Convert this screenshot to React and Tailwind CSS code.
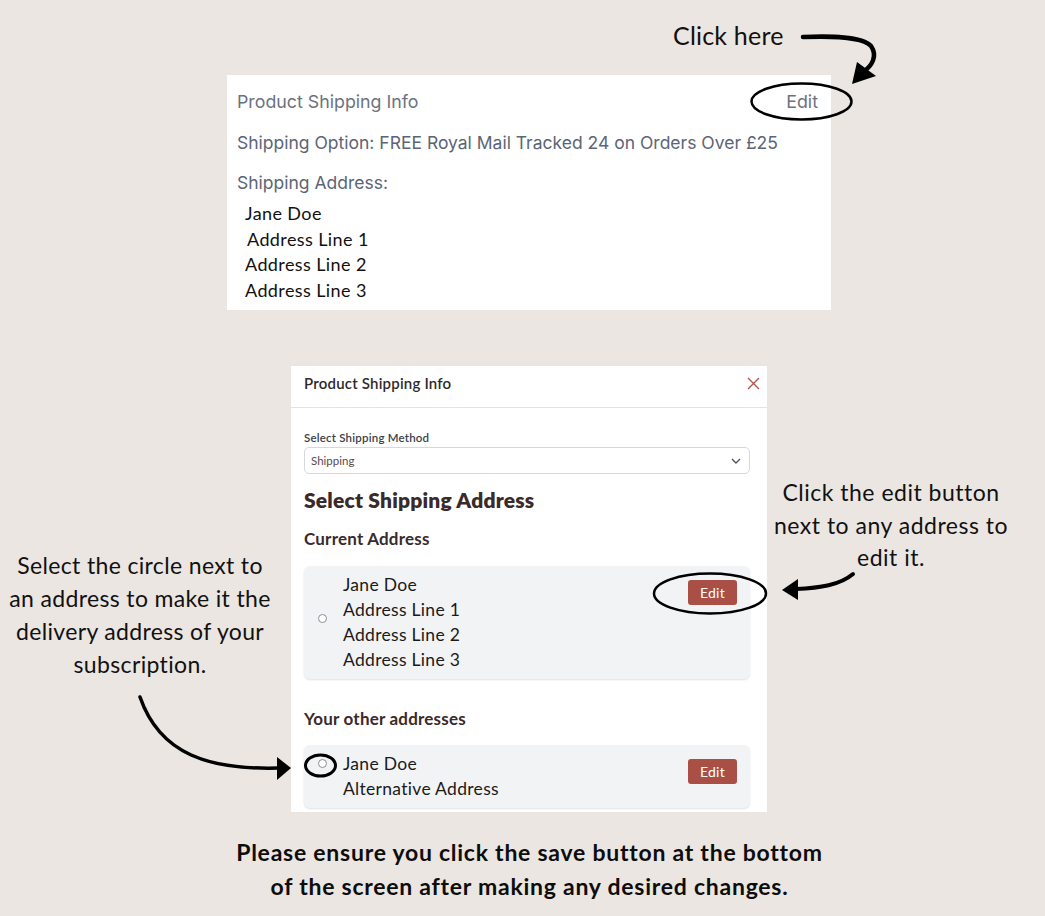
import React from "react";

const ann = { fontFamily: "Lato, 'Open Sans', sans-serif" };
const ui = { fontFamily: "Inter, Roboto, 'Liberation Sans', sans-serif" };

function Radio() {
  return <span className="block w-[9px] h-[9px] rounded-full border border-[#8a8f99] bg-white shrink-0" />;
}

function EditBtn() {
  return (
    <button className="w-[49px] h-[25px] rounded-[3px] bg-[#a94f45] text-white text-[14px] tracking-[0.3px] leading-none flex items-center justify-center shrink-0">
      Edit
    </button>
  );
}

function AddressCard({ lines, radioAlign, btnMt }) {
  return (
    <div className="flex rounded-[6px] bg-[#f2f3f5] shadow-[0_1px_2px_rgba(0,0,0,0.12)] pl-[14px] pr-[13px]">
      <div className={`flex ${radioAlign} pt-[6px] pb-[7px] grow`}>
        <div className={radioAlign === "items-start" ? "pt-[8px]" : "pb-[8px]"}>
          <Radio />
        </div>
        <div className="ml-[16px] text-[17.5px] tracking-[0.3px] leading-[25px] text-[#1a1a1a]">
          {lines.map((l) => (
            <div key={l}>{l}</div>
          ))}
        </div>
      </div>
      <div className={btnMt}>
        <EditBtn />
      </div>
    </div>
  );
}

export default function App() {
  return (
    <div className="relative w-[1045px] h-[916px] bg-[#ebe6e1] overflow-hidden" style={ann}>
      {/* Click here */}
      <div className="pt-[21px] pl-[673px] text-[25px] tracking-[0.2px] leading-[28px] text-[#111]">Click here</div>

      {/* Top card */}
      <div className="ml-[227px] mt-[26px] w-[604px] h-[235px] bg-white pl-[10px] pr-[13px]">
        <div className="flex justify-between items-center h-[50px] pt-[4px] text-[17.8px] text-[#6b7380]" style={ui}>
          <span>Product Shipping Info</span>
          <span>Edit</span>
        </div>
        <div className="text-[17.5px] leading-[30px] text-[#5b6575] mt-[3px]" style={ui}>
          Shipping Option: FREE Royal Mail Tracked 24 on Orders Over £25
        </div>
        <div className="text-[17.5px] leading-[30px] text-[#5b6575] mt-[10px]" style={ui}>
          Shipping Address:
        </div>
        <div className="pl-[8px] text-[18px] tracking-[0.4px] leading-[25.5px] text-[#111] mt-[3px]">
          <div>Jane Doe</div>
          <div className="pl-[2px]">Address Line 1</div>
          <div>Address Line 2</div>
          <div>Address Line 3</div>
        </div>
      </div>

      {/* Middle row */}
      <div className="flex mt-[56px]">
        <div className="w-[280px] mr-[11px] pt-[183px] text-center text-[23px] tracking-[0.35px] leading-[33px] text-[#111]">
          <div className="whitespace-nowrap">Select the circle next to</div>
          <div className="whitespace-nowrap">an address to make it the</div>
          <div className="whitespace-nowrap">delivery address of your</div>
          <div className="whitespace-nowrap">subscription.</div>
        </div>

        {/* Modal */}
        <div className="w-[476px] h-[446px] bg-white">
          <div className="h-[42px] border-b border-[#e3e3e3] flex items-center justify-between pl-[13px] pr-[7px] pb-[6px]">
            <span className="text-[15px] tracking-[0.2px] font-semibold text-[#2e2a2b]">Product Shipping Info</span>
            <svg width="13" height="13" viewBox="0 0 13 13">
              <path d="M1 1 L12 12 M12 1 L1 12" stroke="#b5544a" strokeWidth="1.4" fill="none" />
            </svg>
          </div>
          <div className="pl-[13px] pr-[17px]">
            <div className="pt-[23px] text-[11.5px] tracking-[0.2px] leading-[14px] font-semibold text-[#3b3f4a]">Select Shipping Method</div>
            <div className="mt-[2px] h-[27px] border border-[#d5d8de] rounded-[5px] flex items-center justify-between pl-[6px] pr-[8px]">
              <span className="text-[11.5px] text-[#5a4a4a]">Shipping</span>
              <svg width="10" height="6" viewBox="0 0 10 6">
                <path d="M1 1 L5 5 L9 1" stroke="#4b5563" strokeWidth="1.4" fill="none" />
              </svg>
            </div>
            <div className="mt-[14px] text-[21px] tracking-[0.2px] leading-[24px] font-extrabold text-[#3a2a2a]">Select Shipping Address</div>
            <div className="mt-[17px] text-[17px] tracking-[0.2px] leading-[20px] font-bold text-[#3a2a2a]">Current Address</div>
            <div className="mt-[17px]">
              <AddressCard
                lines={["Jane Doe", "Address Line 1", "Address Line 2", "Address Line 3"]}
                radioAlign="items-center"
                btnMt="mt-[14px]"
              />
            </div>
            <div className="mt-[30px] text-[17px] tracking-[0.2px] leading-[20px] font-bold text-[#3a2a2a]">Your other addresses</div>
            <div className="mt-[16px]">
              <AddressCard lines={["Jane Doe", "Alternative Address"]} radioAlign="items-start" btnMt="mt-[14px]" />
            </div>
          </div>
        </div>

        <div className="w-[248px] ml-[0px] pt-[110px] text-center text-[23px] tracking-[0.5px] leading-[32.5px] text-[#111]">
          <div className="whitespace-nowrap">Click the edit button</div>
          <div className="whitespace-nowrap">next to any address to</div>
          <div className="whitespace-nowrap">edit it.</div>
        </div>
      </div>

      {/* Bottom note */}
      <div className="mt-[23px] text-center pl-[14px] text-[23px] tracking-[0.75px] leading-[34px] font-bold text-[#0d0d0d]">
        <div className="whitespace-nowrap">Please ensure you click the save button at the bottom</div>
        <div className="whitespace-nowrap">of the screen after making any desired changes.</div>
      </div>

      {/* Annotation overlay */}
      <svg className="absolute inset-0 pointer-events-none" width="1045" height="916" viewBox="0 0 1045 916">
        <g fill="none" stroke="#000" strokeLinecap="round">
          <path d="M803 37 C 830 36, 862 36, 871 46 C 878 56, 872 66, 863 72" strokeWidth="4.5" />
          <ellipse cx="801.5" cy="101.5" rx="50" ry="18" strokeWidth="2.5" />
          <ellipse cx="710" cy="593.5" rx="56" ry="20" strokeWidth="2.5" />
          <ellipse cx="320.5" cy="765.5" rx="15" ry="10.5" strokeWidth="3" />
          <path d="M853 574 C 840 585, 820 588, 796 589" strokeWidth="4" />
          <path d="M140 697 C 160 755, 210 770, 279 768" strokeWidth="3.5" />
        </g>
        <g fill="#000">
          <polygon points="852,84 857,62 876,76" />
          <polygon points="782,590 798,579 798,600" />
          <polygon points="291,768 277,757 277,780" />
        </g>
      </svg>
    </div>
  );
}
